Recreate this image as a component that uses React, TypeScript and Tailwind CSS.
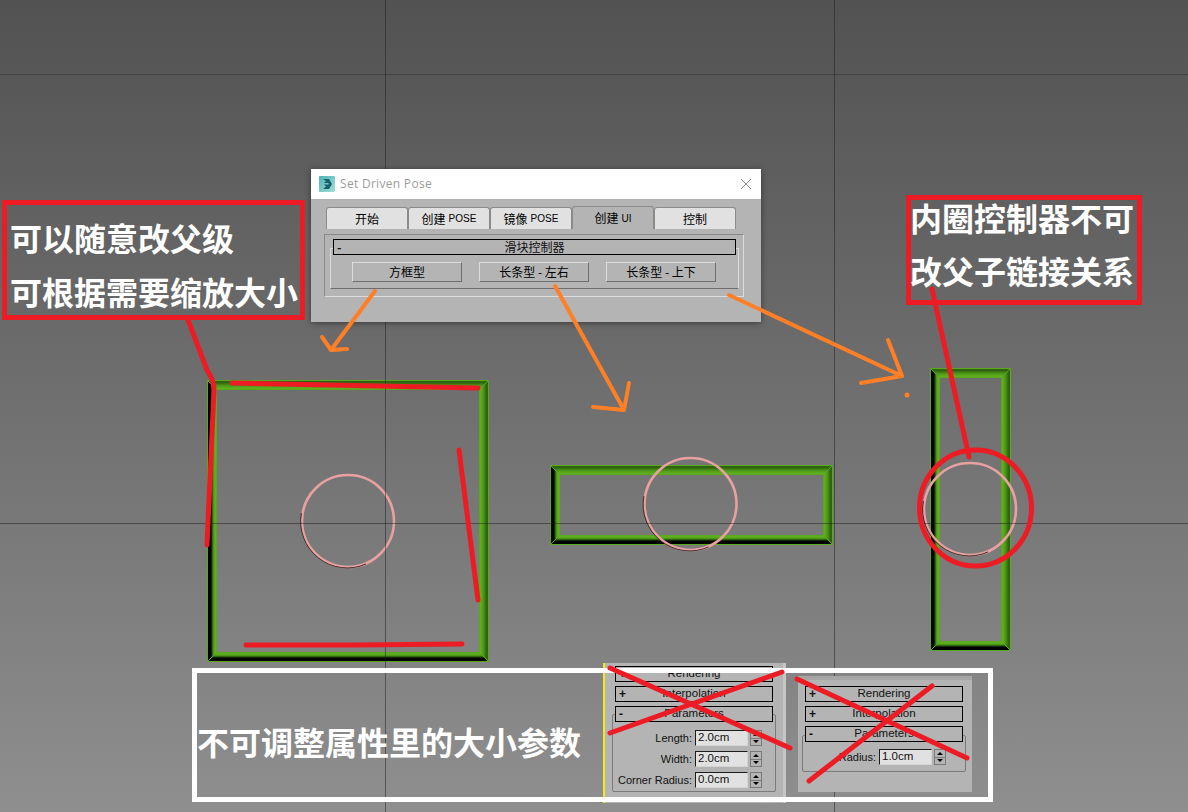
import type { ReactNode } from 'react';

const CJK = "font-['Noto_Sans_CJK_SC','Noto_Sans',sans-serif]";

const EDGE_LIGHT = ['#5aa81c', '#2f6511', '#2f6511', '#387412', '#438616', '#4c9418', '#55a01a', '#5aa81c', '#60ae20', '#5aa81c'];
const EDGE_DARK = ['#5aa81c', '#000000', '#000000', '#000000', '#14280a', '#2f6511', '#4c9418', '#5aa81c', '#60ae20', '#5aa81c'];
const BEVEL = 10;

// 3ds Max shape with beveled sides: trapezoids painted from the rim inwards
function BevelFrame({ x, y, w, h }: { x: number; y: number; w: number; h: number }) {
  const ix0 = x + BEVEL;
  const iy0 = y + BEVEL;
  const ix1 = x + w - BEVEL;
  const iy1 = y + h - BEVEL;
  return (
    <g shapeRendering="crispEdges">
      {EDGE_LIGHT.map((light, i) => {
        const x0 = x + i;
        const y0 = y + i;
        const x1 = x + w - i;
        const y1 = y + h - i;
        const dark = EDGE_DARK[i];
        return (
          <g key={i}>
            <polygon points={`${x0},${y0} ${x1},${y0} ${ix1},${iy0} ${ix0},${iy0}`} fill={light} />
            <polygon points={`${x1},${y0} ${x1},${y1} ${ix1},${iy1} ${ix1},${iy0}`} fill={light} />
            <polygon points={`${x0},${y1} ${x1},${y1} ${ix1},${iy1} ${ix0},${iy1}`} fill={dark} />
            <polygon points={`${x0},${y0} ${x0},${y1} ${ix0},${iy1} ${ix0},${iy0}`} fill={dark} />
          </g>
        );
      })}
      <path
        d={`M${x} ${y}l10 10M${x + w} ${y}l-10 10M${x} ${y + h}l10 -10M${x + w} ${y + h}l-10 -10`}
        stroke="#5aa81c"
        fill="none"
      />
    </g>
  );
}

function Ring({ cx, cy, r }: { cx: number; cy: number; r: number }) {
  const d = r + 0.6;
  return (
    <g fill="none">
      <circle cx={cx} cy={cy} r={r} stroke="#e9a0a0" strokeWidth="2.6" />
      <path
        d={`M${cx - d} ${cy - 8}A${d} ${d} 0 0 0 ${cx + 18} ${cy + Math.sqrt(d * d - 324)}`}
        stroke="#1c1414"
        strokeWidth="0.8"
      />
    </g>
  );
}

function Tab({ label, latin, active }: { label: string; latin?: string; active?: boolean }) {
  return (
    <div
      className={`flex w-[82px] items-center justify-center gap-[3px] rounded-t-[3px] border border-b-0 border-[#8a8a8a] text-[12px] text-black ${
        active ? 'h-[23px] bg-[#b4b4b4]' : 'h-[22px] bg-[#e1e1e1]'
      }`}
    >
      {label}
      {latin && <span className="font-['Liberation_Sans',sans-serif] text-[10px]">{latin}</span>}
    </div>
  );
}

function PoseButton({ label }: { label: string }) {
  return (
    <div className="flex h-[20px] w-[110px] items-center justify-center border border-t-[#dcdcdc] border-l-[#dcdcdc] border-r-[#6e6e6e] border-b-[#6e6e6e] text-[12px] text-black">
      {label}
    </div>
  );
}

function RolloutBar({ label, sign }: { label: ReactNode; sign: string }) {
  return (
    <div className="relative z-10 flex h-[16px] items-center justify-center border border-black bg-[#b4b4b4] text-[11.5px] leading-none text-[#111]">
      <span className="absolute left-[3px] text-[12px] font-bold">{sign}</span>
      {label}
    </div>
  );
}

function Spinner() {
  return (
    <div className="ml-[2px] flex h-[16px] w-[12px] flex-col border border-[#7a7a7a] bg-[#b4b4b4]">
      <div className="flex flex-1 items-center justify-center border-b border-[#7a7a7a]">
        <div className="h-0 w-0 border-x-[3px] border-b-[3px] border-x-transparent border-b-black" />
      </div>
      <div className="flex flex-1 items-center justify-center">
        <div className="h-0 w-0 border-x-[3px] border-t-[3px] border-x-transparent border-t-black" />
      </div>
    </div>
  );
}

function Field({ label, value, labelWidth }: { label: string; value: string; labelWidth: string }) {
  return (
    <div className="flex h-[16px] items-center">
      <span className={`${labelWidth} pr-[3px] text-right text-[11px] whitespace-nowrap text-[#111]`}>{label}</span>
      <div className="flex h-[16px] w-[53px] items-center border border-t-[#1c1c1c] border-l-[#1c1c1c] border-r-[#d4d4d4] border-b-[#d4d4d4] bg-[#e1e1e1] pl-[2px] text-[11.5px] text-[#111]">
        {value}
      </div>
      <Spinner />
    </div>
  );
}

export default function App() {
  return (
    <div className="relative h-[812px] w-[1188px] overflow-hidden bg-gradient-to-b from-[#525252] to-[#8f8f8f] font-['Liberation_Sans',sans-serif]">
      {/* Shapes in the viewport */}
      <svg className="absolute inset-0" width="1188" height="812">
        <BevelFrame x={207} y={380} w={282} h={282} />
        <BevelFrame x={550} y={465} w={283} h={80} />
        <BevelFrame x={930} y={368} w={81} h={283} />
        <Ring cx={348} cy={521} r={46} />
        <Ring cx={690.5} cy={504} r={46} />
        <Ring cx={970} cy={509} r={46} />
      </svg>

      {/* Viewport grid */}
      <div className="absolute top-[74px] left-0 h-px w-full bg-[#1e1e1e]/40" />
      <div className="absolute top-[523px] left-0 h-px w-full bg-[#1e1e1e]/50" />
      <div className="absolute top-0 left-[385px] h-full w-px bg-[#1e1e1e]/50" />
      <div className="absolute top-0 left-[834px] h-full w-px bg-[#1e1e1e]/50" />

      {/* Set Driven Pose dialog */}
      <div className={`absolute top-[169px] left-[311px] flex h-[153px] w-[450px] flex-col bg-[#b4b4b4] shadow-[0_1px_6px_rgba(0,0,0,0.45)] ${CJK}`}>
        <div className="flex h-[30px] items-center bg-white pr-[9px] pl-[8px]">
          <svg width="16" height="16" viewBox="0 0 16 16">
            <defs>
              <linearGradient id="logo" x1="0" y1="0" x2="1" y2="1">
                <stop offset="0" stopColor="#4fb0b8" />
                <stop offset="1" stopColor="#a4e0d6" />
              </linearGradient>
            </defs>
            <rect width="16" height="16" rx="1" fill="url(#logo)" />
            <path d="M4 3h6l3 5-3 5H4l3-2.5-2-2h4l1-.5-1-1H5l2-2z" fill="#17606c" />
          </svg>
          <span className="ml-[5px] font-['Open_Sans',sans-serif] text-[12px] tracking-[0.3px] text-[#9c9c9c]">Set Driven Pose</span>
          <svg className="ml-auto" width="12" height="12" viewBox="0 0 12 12" stroke="#8a8a8a" strokeWidth="1">
            <path d="M1 1l10 10M11 1L1 11" />
          </svg>
        </div>

        <div className="mt-[7px] ml-[15px] flex h-[23px] items-end">
          <Tab label="开始" />
          <Tab label="创建" latin="POSE" />
          <Tab label="镜像" latin="POSE" />
          <Tab label="创建" latin="UI" active />
          <Tab label="控制" />
        </div>

        <div className="mt-[5px] ml-[13px] h-[63px] w-[420px] border border-t-[#8a8a8a] border-l-[#8a8a8a] border-r-[#dcdcdc] border-b-[#dcdcdc] pt-[4px]">
          <div className="mx-[8px] mb-[-7px] w-[403px]">
            <RolloutBar label={<span className="text-[12px]">滑块控制器</span>} sign="-" />
          </div>
          <div className="mx-[5px] flex h-[41px] w-[409px] items-start gap-[17px] border border-t-[#dcdcdc] border-l-[#dcdcdc] border-r-[#dcdcdc] border-b-[#6e6e6e] pt-[13px] pl-[21px]">
            <PoseButton label="方框型" />
            <PoseButton label="长条型 - 左右" />
            <PoseButton label="长条型 - 上下" />
          </div>
        </div>
      </div>

      {/* Left annotation */}
      <div className={`absolute top-[200px] left-[2px] flex h-[120px] w-[303px] flex-col gap-[22px] border-[5px] border-[#ed1c24] pt-[16px] pl-[3px] text-[32px] leading-[32px] font-bold whitespace-nowrap text-white ${CJK}`}>
        <span>可以随意改父级</span>
        <span>可根据需要缩放大小</span>
      </div>

      {/* Right annotation */}
      <div className={`absolute top-[195px] left-[906px] z-20 flex h-[110px] w-[236px] flex-col gap-[21px] border-[5px] border-[#ed1c24] pt-[1px] text-[32px] leading-[32px] font-bold whitespace-nowrap text-white ${CJK}`}>
        <span className="ml-[-1px]">内圈控制器不可</span>
        <span className="ml-[-1px]">改父子链接关系</span>
      </div>

      {/* Max command panel: Rectangle */}
      <div className="absolute top-[663px] left-[603px] flex h-[140px] w-[183px] border-r-[3px] border-l-[2px] border-r-[#c6c6c6] border-l-[#f5e81c] bg-[#b4b4b4]">
        <div className="flex w-full flex-col gap-[4px] pt-[3px] pl-[10px]">
          <div className="w-[158px]"><RolloutBar label="Rendering" sign="+" /></div>
          <div className="w-[158px]"><RolloutBar label="Interpolation" sign="+" /></div>
          <div className="w-[158px]"><RolloutBar label="Parameters" sign="-" /></div>
          <div className="mt-[-12px] ml-[-3px] flex h-[78px] w-[164px] flex-col gap-[5px] rounded-[2px] border border-[#7a7a7a] pt-[15px]">
            <Field label="Length:" value="2.0cm" labelWidth="w-[82px]" />
            <Field label="Width:" value="2.0cm" labelWidth="w-[82px]" />
            <Field label="Corner Radius:" value="0.0cm" labelWidth="w-[82px]" />
          </div>
        </div>
      </div>

      {/* Max command panel: Circle */}
      <div className="absolute top-[676px] left-[798px] flex h-[116px] w-[174px] flex-col gap-[4px] border-t-[4px] border-t-[#a6a6a6] bg-[#b4b4b4] pt-[6px] pl-[7px]">
        <div className="w-[158px]"><RolloutBar label="Rendering" sign="+" /></div>
        <div className="w-[158px]"><RolloutBar label="Interpolation" sign="+" /></div>
        <div className="w-[158px]"><RolloutBar label="Parameters" sign="-" /></div>
        <div className="mt-[-11px] ml-[-3px] h-[37px] w-[164px] rounded-[2px] border border-[#7a7a7a] pt-[13px]">
          <Field label="Radius:" value="1.0cm" labelWidth="w-[76px]" />
        </div>
      </div>

      {/* Bottom annotation */}
      <div className={`absolute top-[668px] left-[192px] z-20 flex h-[134px] w-[801px] items-center border-[5px] border-white pt-[12px] text-[32px] leading-[32px] font-bold whitespace-nowrap text-white ${CJK}`}>
        不可调整属性里的大小参数
      </div>

      {/* Hand drawn marks */}
      <svg className="absolute inset-0 z-30" width="1188" height="812" fill="none" strokeLinecap="round" strokeLinejoin="round">
        <g stroke="#ed1c24" strokeWidth="5">
          <path d="M188 320L207 370Q214 380 214 390L207 545" />
          <path d="M232 383L478 388" />
          <path d="M459 450L478 600" />
          <path d="M246 645L354 645L462 644" />
          <path d="M932 289L969 457" />
          <ellipse cx="975.5" cy="508" rx="56" ry="58" />
          <path d="M610 668L790 748M610 733L782 672" />
          <path d="M797 679L967 758M809 781L932 686" />
        </g>
        <g stroke="#ff7f27" strokeWidth="4">
          <path d="M375 291L331 350M322 337L331 350L347 349" />
          <path d="M555 286L624 410M629 383L624 410L593 407" />
          <path d="M729 295L902 376M888 340L902 376L861 383" />
        </g>
        <circle cx="907" cy="395" r="2.5" fill="#ff7f27" />
      </svg>
    </div>
  );
}
